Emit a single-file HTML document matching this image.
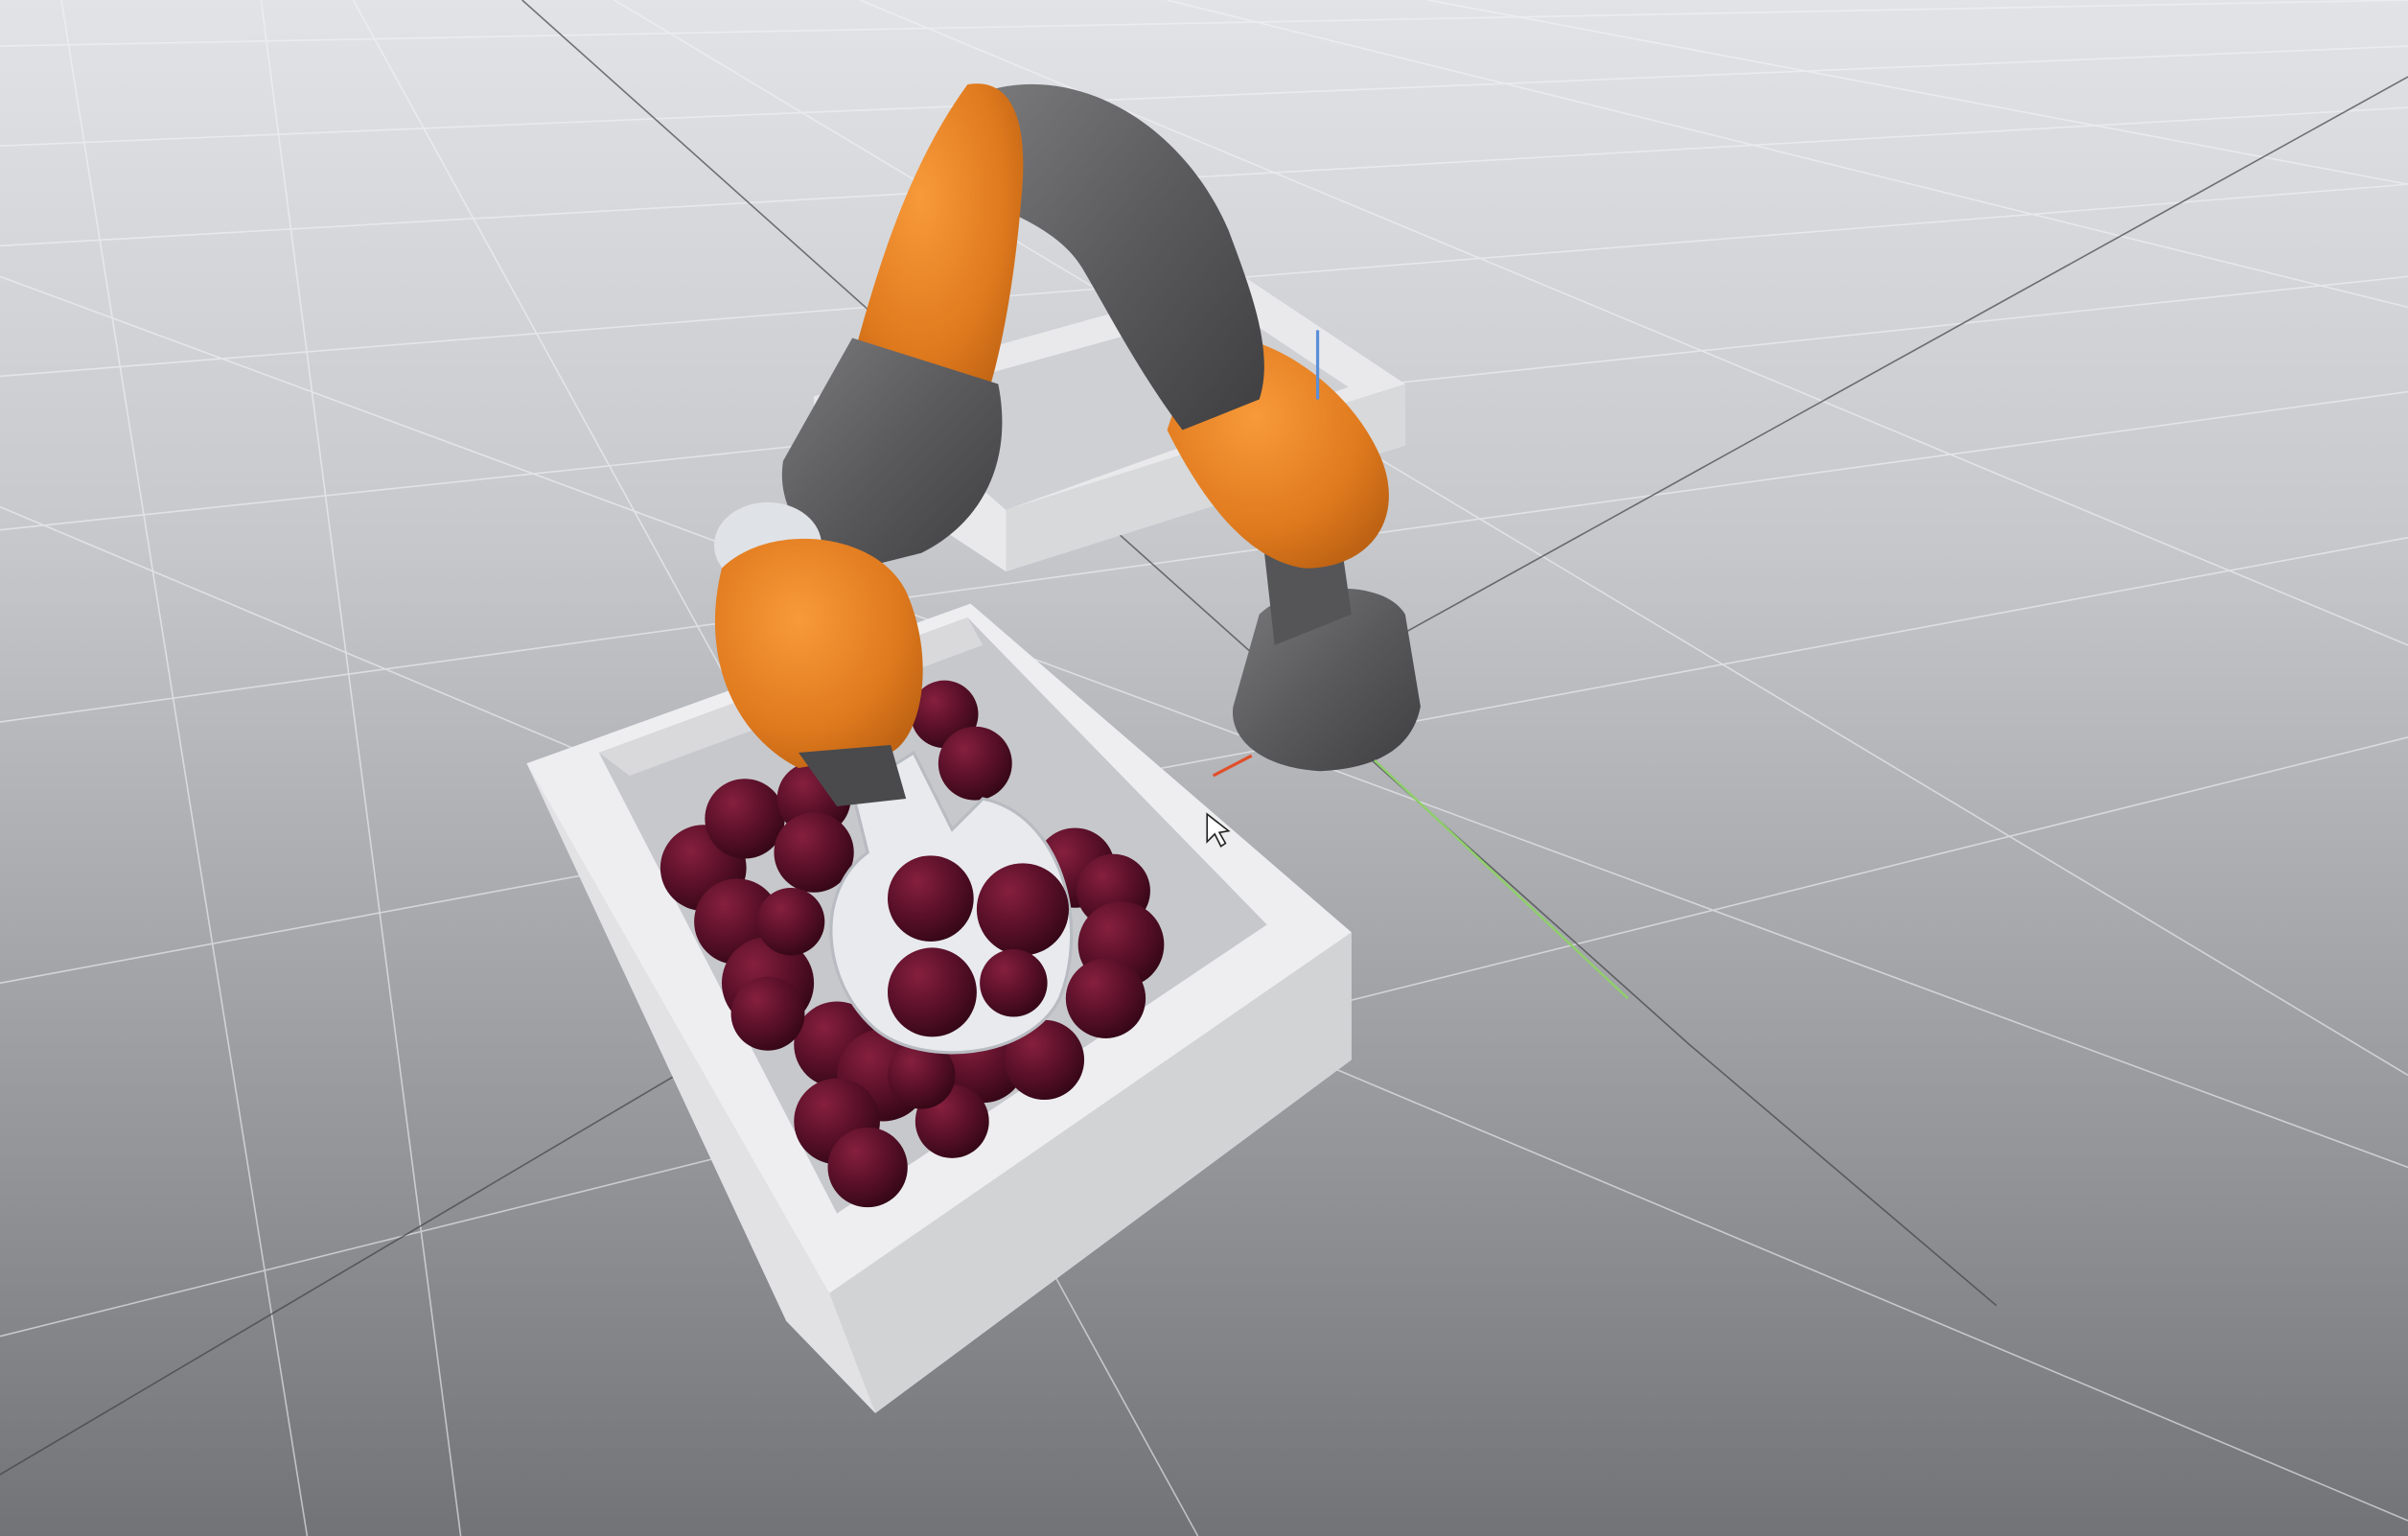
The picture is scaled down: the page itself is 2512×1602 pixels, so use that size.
<!DOCTYPE html>
<html><head><meta charset="utf-8"><style>
html,body{margin:0;padding:0;width:2512px;height:1602px;overflow:hidden;background:#b8babe}
svg{display:block}
</style></head><body>
<svg width="2512" height="1602" viewBox="0 0 1568 1000" preserveAspectRatio="none" xmlns="http://www.w3.org/2000/svg">
<defs>
<linearGradient id="bg" x1="0" y1="0" x2="0" y2="1">
<stop offset="0" stop-color="#e2e3e6"/><stop offset="0.35" stop-color="#c6c8cc"/><stop offset="0.7" stop-color="#9a9ca0"/><stop offset="1" stop-color="#717377"/>
</linearGradient>
<radialGradient id="ball" cx="0.35" cy="0.3" r="0.75">
<stop offset="0" stop-color="#86203e"/><stop offset="0.5" stop-color="#5e112b"/><stop offset="1" stop-color="#340716"/>
</radialGradient>
<radialGradient id="or" cx="0.4" cy="0.35" r="0.8">
<stop offset="0" stop-color="#f79a3a"/><stop offset="0.6" stop-color="#e07a1e"/><stop offset="1" stop-color="#b45c10"/>
</radialGradient>
<linearGradient id="gr" x1="0" y1="0" x2="1" y2="1">
<stop offset="0" stop-color="#7a7a7c"/><stop offset="0.5" stop-color="#5a5a5c"/><stop offset="1" stop-color="#3e3e40"/>
</linearGradient>
</defs>
<rect width="1568" height="1000" fill="url(#bg)"/>
<g stroke="#f4f4f6" stroke-width="1" opacity="0.6" fill="none">
<path d="M0 30 L1568 0 M0 95 L1568 30 M0 160 L1568 70 M0 245 L1568 120 M0 345 L1568 180 M0 470 L1568 255 M0 640 L1568 350 M0 870 L1568 480"/>
<path d="M40 0 L200 1000 M230 0 L780 1000 M400 0 L1568 700 M560 0 L1568 420 M170 0 L300 1000"/>
<path d="M760 0 L1568 200 M930 0 L1568 120"/>
<path d="M0 330 L1568 990 M0 180 L1568 760"/>
</g>
<g stroke="#404245" stroke-width="1" opacity="0.7" fill="none">
<path d="M340 0 L1100 680 L1300 850"/>
<path d="M0 960 L440 700"/>
<path d="M1568 50 L900 420"/>
</g>
<polygon points="530,258 810,180 915,250 915,290 655,372 530,290" fill="#e9e9eb"/>
<polygon points="575,262 800,200 878,252 655,332" fill="#cfd0d3"/>
<polygon points="655,372 915,290 915,250 655,332" fill="#d8d9db"/>
<polygon points="343,497 632,393 880,607 880,690 570,920 512,860" fill="#dcdcde"/>
<polygon points="343,497 632,393 880,607 540,842" fill="#eeeef0"/>
<polygon points="540,842 880,607 880,690 570,920" fill="#d2d3d5"/>
<polygon points="343,497 540,842 570,920 512,860" fill="#e2e2e4"/>
<polygon points="390,490 630,402 825,602 545,790" fill="#c7c8cb"/>
<polygon points="390,490 630,402 640,420 410,505" fill="#d9d9dc"/>
<g fill="url(#ball)">
<circle cx="458" cy="565" r="28"/><circle cx="485" cy="533" r="26"/><circle cx="480" cy="600" r="28"/><circle cx="500" cy="640" r="30"/>
<circle cx="530" cy="520" r="24"/><circle cx="530" cy="555" r="26"/><circle cx="545" cy="680" r="28"/><circle cx="575" cy="700" r="30"/>
<circle cx="545" cy="730" r="28"/><circle cx="565" cy="760" r="26"/><circle cx="615" cy="465" r="22"/><circle cx="635" cy="497" r="24"/>
<circle cx="700" cy="565" r="26"/><circle cx="725" cy="580" r="24"/><circle cx="730" cy="615" r="28"/><circle cx="720" cy="650" r="26"/>
<circle cx="640" cy="690" r="28"/><circle cx="680" cy="690" r="26"/><circle cx="620" cy="730" r="24"/><circle cx="515" cy="600" r="22"/>
<circle cx="600" cy="700" r="22"/><circle cx="500" cy="660" r="24"/>
</g>
<path d="M555 515 L595 490 L620 540 L640 520 C690 530 710 600 690 650 C670 690 600 695 570 670 C535 640 530 580 565 555 Z" fill="#e8eaee" stroke="#b8bcc2" stroke-width="2"/>
<g fill="url(#ball)">
<circle cx="606" cy="585" r="28"/><circle cx="666" cy="592" r="30"/><circle cx="607" cy="646" r="29"/><circle cx="660" cy="640" r="22"/>
</g>
<path d="M820 400 C840 380 900 375 915 400 L925 460 C920 485 900 500 860 502 C820 500 800 480 803 460 Z" fill="url(#gr)"/>
<path d="M820 330 L870 330 L880 400 L830 420 Z" fill="#555557"/>
<path d="M780 220 C820 210 880 250 900 300 C915 340 890 370 850 370 C810 365 780 320 760 280 Z" fill="url(#or)"/>
<path d="M640 60 C700 40 770 80 800 150 C815 190 830 230 820 260 L770 280 C740 240 720 200 705 175 C690 150 660 140 640 130 Z" fill="url(#gr)"/>
<path d="M630 55 C660 50 670 80 665 130 C660 190 650 240 640 265 L555 235 C570 180 590 110 630 55 Z" fill="url(#or)"/>
<path d="M555 220 L650 250 C660 300 640 340 600 360 L560 370 C525 360 505 330 510 300 Z" fill="url(#gr)"/>
<ellipse cx="500" cy="355" rx="35" ry="28" fill="#dfe2e7"/>
<path d="M470 370 C500 340 570 345 590 385 C610 430 600 480 580 490 L520 500 C480 480 455 430 470 370 Z" fill="url(#or)"/>
<path d="M520 490 L580 485 L590 520 L545 525 Z" fill="#4a4a4c"/>
<line x1="858" y1="215" x2="858" y2="260" stroke="#5b8fd8" stroke-width="2"/>
<line x1="895" y1="495" x2="1060" y2="650" stroke="#8fcf6a" stroke-width="1.5"/>
<line x1="790" y1="505" x2="815" y2="492" stroke="#e0502a" stroke-width="2"/>
<path d="M786 530 L786 548 L791 543 L795 551 L798 549 L794 542 L800 541 Z" fill="#fff" stroke="#222" stroke-width="1"/>
</svg>
</body></html>
